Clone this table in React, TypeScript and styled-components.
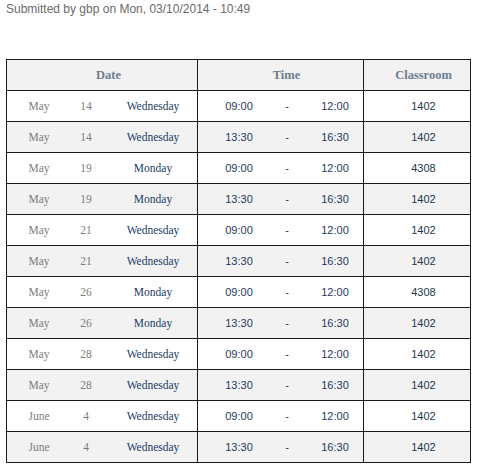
import React from "react";
import styled, { createGlobalStyle } from "styled-components";

const Global = createGlobalStyle`
  html, body { margin: 0; padding: 0; background: #fff; }
  body { font-family: "Liberation Sans", Arial, sans-serif; }
`;

const Page = styled.div`
  padding: 2px 8px 0 6px;
  width: 478px;
  box-sizing: border-box;
`;

const Submitted = styled.div`
  font-family: "Liberation Sans", Arial, sans-serif;
  font-size: 12px;
  line-height: 15px;
  color: #6a6a6a;
`;

const Table = styled.table`
  margin-top: 42px;
  border-collapse: collapse;
  table-layout: fixed;
  width: 464px;
`;

const HeadCell = styled.th<{ $pad: number }>`
  height: 30px;
  padding: 0 0 0 ${(p) => p.$pad}px;
  border: 1px solid #1a1a1a;
  background: #f2f2f2;
  font-family: "Liberation Serif", "Times New Roman", serif;
  font-weight: bold;
  font-size: 12.5px;
  color: #6d7e8f;
  text-align: center;
`;

const Row = styled.tr<{ $alt: boolean }>`
  background: ${(p) => (p.$alt ? "#f2f2f2" : "#ffffff")};
`;

const Cell = styled.td<{ $pad?: number }>`
  height: 30px;
  padding: 0 0 0 ${(p) => p.$pad ?? 0}px;
  border: 1px solid #1a1a1a;
  vertical-align: middle;
`;

const DateGrid = styled.div`
  display: grid;
  grid-template-columns: 48px 46px 88px;
  align-items: center;
  font-family: "Liberation Serif", "Times New Roman", serif;
  font-size: 11.5px;
  text-align: center;
`;

const Muted = styled.span`
  color: #7c7c7c;
`;

const Weekday = styled.span`
  color: #1b3a66;
`;

const TimeGrid = styled.div`
  display: grid;
  grid-template-columns: 48px 48px 48px;
  align-items: center;
  font-family: "Liberation Sans", Arial, sans-serif;
  font-size: 11px;
  color: #1f3a5e;
  text-align: center;
`;

const Room = styled.div`
  font-family: "Liberation Sans", Arial, sans-serif;
  font-size: 11px;
  color: #22374f;
  text-align: center;
`;

type Entry = { m: string; d: number; w: string; s: string; e: string; r: string };

const data: Entry[] = [
  { m: "May", d: 14, w: "Wednesday", s: "09:00", e: "12:00", r: "1402" },
  { m: "May", d: 14, w: "Wednesday", s: "13:30", e: "16:30", r: "1402" },
  { m: "May", d: 19, w: "Monday", s: "09:00", e: "12:00", r: "4308" },
  { m: "May", d: 19, w: "Monday", s: "13:30", e: "16:30", r: "1402" },
  { m: "May", d: 21, w: "Wednesday", s: "09:00", e: "12:00", r: "1402" },
  { m: "May", d: 21, w: "Wednesday", s: "13:30", e: "16:30", r: "1402" },
  { m: "May", d: 26, w: "Monday", s: "09:00", e: "12:00", r: "4308" },
  { m: "May", d: 26, w: "Monday", s: "13:30", e: "16:30", r: "1402" },
  { m: "May", d: 28, w: "Wednesday", s: "09:00", e: "12:00", r: "1402" },
  { m: "May", d: 28, w: "Wednesday", s: "13:30", e: "16:30", r: "1402" },
  { m: "June", d: 4, w: "Wednesday", s: "09:00", e: "12:00", r: "1402" },
  { m: "June", d: 4, w: "Wednesday", s: "13:30", e: "16:30", r: "1402" },
];

export default function App() {
  return (
    <Page>
      <Global />
      <Submitted>Submitted by gbp on Mon, 03/10/2014 - 10:49</Submitted>
      <Table>
        <colgroup>
          <col style={{ width: 191 }} />
          <col style={{ width: 166 }} />
          <col style={{ width: 107 }} />
        </colgroup>
        <thead>
          <tr>
            <HeadCell $pad={13}>Date</HeadCell>
            <HeadCell $pad={12}>Time</HeadCell>
            <HeadCell $pad={13}>Classroom</HeadCell>
          </tr>
        </thead>
        <tbody>
          {data.map((x, i) => (
            <Row key={i} $alt={i % 2 === 1}>
              <Cell $pad={8}>
                <DateGrid>
                  <Muted>{x.m}</Muted>
                  <Muted>{x.d}</Muted>
                  <Weekday>{x.w}</Weekday>
                </DateGrid>
              </Cell>
              <Cell $pad={17}>
                <TimeGrid>
                  <span>{x.s}</span>
                  <span>-</span>
                  <span>{x.e}</span>
                </TimeGrid>
              </Cell>
              <Cell $pad={13}>
                <Room>{x.r}</Room>
              </Cell>
            </Row>
          ))}
        </tbody>
      </Table>
    </Page>
  );
}
